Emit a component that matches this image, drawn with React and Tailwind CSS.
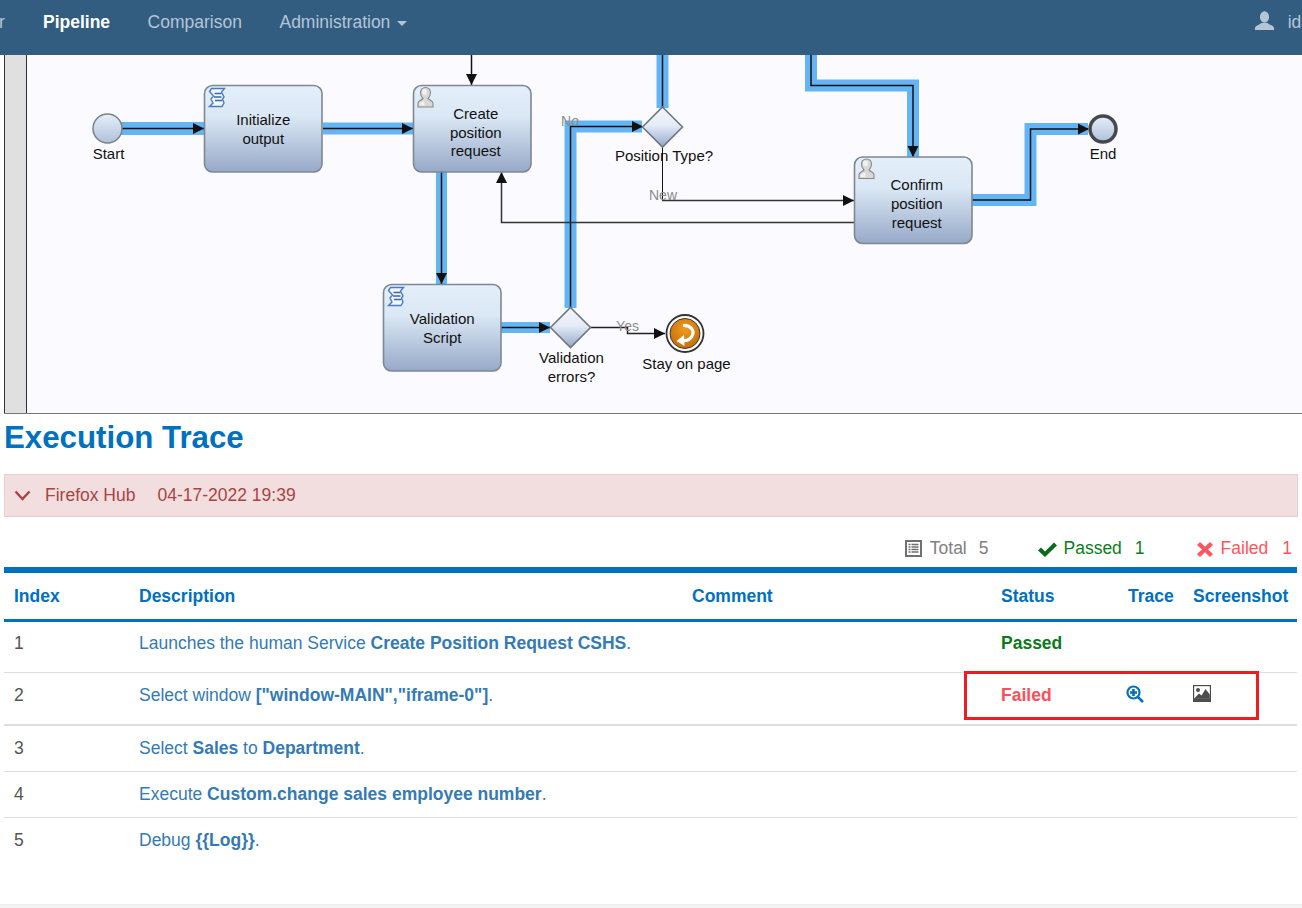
import React from "react";

function Arrow({ x, y, dir }) {
  const pts = {
    r: `${x},${y} ${x - 11},${y - 5.5} ${x - 11},${y + 5.5}`,
    d: `${x},${y} ${x - 5.5},${y - 11} ${x + 5.5},${y - 11}`,
    u: `${x},${y} ${x - 5.5},${y + 11} ${x + 5.5},${y + 11}`,
  }[dir];
  return <polygon points={pts} fill="#111" />;
}

function Flow({ d, hot, w = 1.5, color = "#111" }) {
  return (
    <g fill="none">
      {hot && <path d={d} stroke="#64b5f6" strokeWidth={hot} strokeLinejoin="miter" />}
      <path d={d} stroke={color} strokeWidth={w} />
    </g>
  );
}

function Lines({ items, x, y, size = 15, gap = 19 }) {
  return (
    <text x={x} textAnchor="middle" fontSize={size} fill="#111">
      {items.map((t, i) => (
        <tspan key={t} x={x} y={y + i * gap}>
          {t}
        </tspan>
      ))}
    </text>
  );
}

function ScriptIcon({ x, y }) {
  return (
    <g transform={`translate(${x} ${y})`} fill="#f2f7fd" stroke="#4a7cc4" strokeWidth="1.4">
      <path d="M3 0.5 H16 L13 4 L15.5 9 L14 11 L15.5 15 L13.5 18.5 H1 L4.5 15 L2.5 11 L5 8 L1 3.5 Z" />
      <path d="M6 5.5 H13 M5.5 9 H13 M6.5 12.5 H13.5" fill="none" stroke="#3a66ad" />
    </g>
  );
}

function UserIcon({ x, y }) {
  return (
    <g transform={`translate(${x} ${y})`}>
      <path d="M0.5 20 V16 C0.5 14 4 13 5.5 11.5 C4 10 3 8 3 5.5 C3 2.5 5 0.5 8 0.5 C11 0.5 13 2.5 13 5.5 C13 8 12 10 10.5 11.5 C12 13 15.5 14 15.5 16 V20 Z" fill="#d8d8d8" stroke="#8a8a8a" strokeWidth="1.1" />
      <ellipse cx="7" cy="5" rx="2.5" ry="3" fill="#f0f0f0" />
      <path d="M2 18.5 V16.5 C3 15 5 14.5 7 14.5 V18.5 Z" fill="#f0f0f0" />
    </g>
  );
}

function Task({ x, y, w = 117.5, h = 86.5, icon, label, ly, gap }) {
  return (
    <g>
      <rect x={x} y={y} width={w} height={h} rx="8" fill="url(#task)" stroke="#7f8890" strokeWidth="1.6" />
      {icon === "script" ? <ScriptIcon x={x + 4} y={y + 2.5} /> : <UserIcon x={x + 4} y={y + 1.5} />}
      <Lines items={label} x={x + (icon === "script" ? w / 2 : w / 2 + 3.5)} y={ly} gap={gap} />
    </g>
  );
}

function Gate({ cx, cy }) {
  return (
    <polygon
      points={`${cx},${cy - 20} ${cx + 20},${cy} ${cx},${cy + 20} ${cx - 20},${cy}`}
      fill="url(#gate)"
      stroke="#70777f"
      strokeWidth="1.6"
    />
  );
}

function Diagram() {
  return (
    <svg viewBox="27 55 1275 358" width="1275" height="358" className="block">
      <defs>
        <linearGradient id="task" x1="0" y1="0" x2="0" y2="1">
          <stop offset="0" stopColor="#e3effa" />
          <stop offset="0.35" stopColor="#dbe8f5" />
          <stop offset="1" stopColor="#97a9c8" />
        </linearGradient>
        <linearGradient id="gate" x1="0" y1="0" x2="0" y2="1">
          <stop offset="0" stopColor="#f2f5fc" />
          <stop offset="0.45" stopColor="#e6ecf7" />
          <stop offset="1" stopColor="#94a8cb" />
        </linearGradient>
        <linearGradient id="orb" x1="0" y1="0" x2="0" y2="1">
          <stop offset="0" stopColor="#e6eff9" />
          <stop offset="1" stopColor="#afc1da" />
        </linearGradient>
        <radialGradient id="orange" cx="0.5" cy="0.35" r="0.7">
          <stop offset="0" stopColor="#f09a1e" />
          <stop offset="1" stopColor="#c26a08" />
        </radialGradient>
      </defs>

      <Flow d="M121 128.5 H204" hot={13} />
      <Arrow x={204} y={128.5} dir="r" />
      <Flow d="M323 128.5 H413" hot={12} />
      <Arrow x={413} y={128.5} dir="r" />
      <Flow d="M441.5 172 V284" hot={11} />
      <Arrow x={441.5} y={284} dir="d" />
      <Flow d="M501 327.5 H550" hot={11} />
      <Arrow x={550} y={327.5} dir="r" />
      <Flow d="M570.5 308 V126.5 H642" hot={12} />
      <Arrow x={643} y={126.5} dir="r" />
      <Flow d="M662.5 55 V108" hot={12} />
      <Flow d="M811 55 V85.5 H913 V157" hot={12} />
      <Arrow x={913} y={157} dir="d" />
      <Flow d="M972 200 H1030.5 V129 H1088" hot={12} />
      <Arrow x={1089} y={129} dir="r" />
      <Flow d="M471.5 55 V85" />
      <Arrow x={471.5} y={85} dir="d" />
      <Flow d="M662.5 146 V200.5" w={1} />
      <Flow d="M662 200.5 H854" color="#333" />
      <Arrow x={854} y={200.5} dir="r" />
      <Flow d="M854 222.5 H501.5 V172" color="#333" />
      <Arrow x={501.5} y={172} dir="u" />
      <Flow d="M590 327.5 H627.5 V333.5 H665" color="#222" />
      <Arrow x={665} y={333.5} dir="r" />

      <circle cx="107.5" cy="128.5" r="14.5" fill="url(#orb)" stroke="#7b8288" strokeWidth="1.5" />
      <text x="108.5" y="158.5" textAnchor="middle" fontSize="15" fill="#111">Start</text>

      <Task x={204.5} y={85.5} icon="script" label={["Initialize", "output"]} ly={125} />
      <Task x={413.5} y={85.5} icon="user" label={["Create", "position", "request"]} ly={119} gap={18.5} />
      <Task x={383.5} y={284.5} icon="script" label={["Validation", "Script"]} ly={324} />
      <Task x={854.5} y={157} icon="user" label={["Confirm", "position", "request"]} ly={190} />

      <Gate cx={662.5} cy={127} />
      <Gate cx={570.5} cy={327.5} />
      <text x="664" y="161" textAnchor="middle" fontSize="15" fill="#111">Position Type?</text>
      <Lines items={["Validation", "errors?"]} x={571.5} y={363} gap={18.5} />

      <circle cx="1103" cy="129" r="13" fill="url(#orb)" stroke="#46494c" strokeWidth="3.5" />
      <text x="1103" y="159" textAnchor="middle" fontSize="15" fill="#111">End</text>

      <circle cx="685" cy="333.5" r="18.5" fill="#fff" stroke="#333" strokeWidth="1.8" />
      <circle cx="685" cy="333.5" r="15" fill="url(#orange)" stroke="#3a3a3a" strokeWidth="1" />
      <path d="M683 325.5 C691 325 695 331 692 336 C690 340 686 341 682 340.5" fill="none" stroke="#fff" strokeWidth="3.2" />
      <polygon points="676.5,341 684,335 684.5,346" fill="#fff" />
      <text x="686.5" y="369" textAnchor="middle" fontSize="15" fill="#111">Stay on page</text>

      <text x="570" y="126" textAnchor="middle" fontSize="14" fill="#8a8a8a">No</text>
      <text x="663" y="200" textAnchor="middle" fontSize="14" fill="#8a8a8a">New</text>
      <text x="627.5" y="331" textAnchor="middle" fontSize="14" fill="#8a8a8a">Yes</text>
    </svg>
  );
}

const rows = [
  { i: 1, h: "h-[52px]", pad: "pb-[6px]", parts: ["Launches the human Service ", <b key="b">Create Position Request CSHS</b>, "."], status: "Passed" },
  { i: 2, h: "h-[53px]", pad: "pb-[6px]", parts: ["Select window ", <b key="b">["window-MAIN","iframe-0"]</b>, "."], status: "Failed", thick: true },
  { i: 3, h: "h-[46px]", pad: "", parts: ["Select ", <b key="a">Sales</b>, " to ", <b key="b">Department</b>, "."] },
  { i: 4, h: "h-[46px]", pad: "", parts: ["Execute ", <b key="b">Custom.change sales employee number</b>, "."] },
  { i: 5, h: "h-[46px]", pad: "", parts: ["Debug ", <b key="b">{"{{Log}}"}</b>, "."], last: true },
];

function ZoomIcon() {
  return (
    <svg width="18" height="18" viewBox="0 0 18 18" className="-mt-[3px] block">
      <circle cx="7.5" cy="7.5" r="6" fill="none" stroke="#0070c0" strokeWidth="2.2" />
      <path d="M11.8 11.8 L17 17" stroke="#0070c0" strokeWidth="2.6" />
      <path d="M4 7.5 H11 M7.5 4 V11" stroke="#0070c0" strokeWidth="2.6" />
    </svg>
  );
}

function PictureIcon() {
  return (
    <svg width="18" height="17" viewBox="0 0 18 17" className="-mt-[3px] block">
      <rect width="18" height="17" fill="#4d4d4d" />
      <rect x="1.2" y="1.2" width="15.6" height="12" fill="#fff" />
      <circle cx="5" cy="5" r="2" fill="#4d4d4d" />
      <path d="M1.2 13.5 L6 8.5 L8.5 10.5 L12.5 4 L16.8 9.5 V13.5 Z" fill="#4d4d4d" />
    </svg>
  );
}

export default function App() {
  return (
    <div className="relative flex h-[908px] w-[1302px] flex-col overflow-hidden bg-white font-['Liberation_Sans',Arial,sans-serif] text-[17.5px] text-[#555]">
      <nav className="flex h-[55px] shrink-0 items-start bg-[#335c81] pt-[11px] text-[17.5px] leading-[22px] text-[#b4c6d6]">
        <div className="-ml-[1px] flex gap-[37.5px]">
          <span className="w-[6.5px] overflow-hidden">r</span>
          <span className="font-bold text-white">Pipeline</span>
          <span>Comparison</span>
          <span className="flex items-center">
            Administration
            <span className="ml-[7px] mt-[2px] h-0 w-0 border-x-[5px] border-t-[5px] border-x-transparent border-t-[#b4c6d6]" />
          </span>
        </div>
        <div className="-mr-[9px] ml-auto flex items-center gap-[14px]">
          <svg width="19" height="19" viewBox="0 0 19 19" className="-mt-[3px] block" fill="#b4c6d6">
            <ellipse cx="9.5" cy="6" rx="4.6" ry="5.8" />
            <path d="M0 19 V17 C0 15 4 14 6.5 12 H12.5 C15 14 19 15 19 17 V19 Z" />
          </svg>
          <span>ida</span>
        </div>
      </nav>

      <section className="ml-[4px] flex h-[359px] shrink-0 overflow-hidden border-b border-[#777] bg-[#fbfbff]">
        <div className="w-[23px] shrink-0 border-x border-x-[#333] bg-[#e0e0e0]" />
        <Diagram />
      </section>

      <main className="px-[4px]">
        <h1 className="mt-[6px] text-[31.25px] font-bold leading-[36px] text-[#0070c0]">Execution Trace</h1>

        <div className="mt-[18px] flex h-[43px] items-center border border-[#ebccd1] bg-[#f2dede] pl-[9px] text-[#a94442]">
          <svg width="17" height="11" viewBox="0 0 17 11" className="block" fill="none" stroke="#a94442" strokeWidth="2.4">
            <path d="M1.5 1.5 L8.5 9 L15.5 1.5" />
          </svg>
          <span className="ml-[14px]">Firefox Hub</span>
          <span className="ml-[22px]">04-17-2022 19:39</span>
        </div>

        <div className="mt-[21px] flex h-[20px] items-center justify-end pr-[6px] leading-[20px]">
          <span className="flex items-center text-[#808080]">
            <svg width="17" height="17" viewBox="0 0 17 17" className="mr-[8px] block">
              <rect width="17" height="17" fill="#707070" />
              <rect x="2" y="2" width="13" height="13" fill="#fff" />
              <path d="M3.5 4.5 H13.5 M3.5 7 H13.5 M3.5 9.5 H13.5 M3.5 12 H13.5" stroke="#707070" strokeWidth="1.3" strokeDasharray="2 1 7 0" />
            </svg>
            Total<span className="ml-[12px]">5</span>
          </span>
          <span className="ml-[50px] flex items-center text-[#0f7b21]">
            <svg width="19" height="15" viewBox="0 0 19 15" className="mr-[6px] mt-[2px] block" fill="#0a6b1d">
              <path d="M0 8.5 L3 5.5 L7 9.5 L16 0.5 L19 3.5 L7 15 Z" />
            </svg>
            Passed<span className="ml-[13px]">1</span>
          </span>
          <span className="ml-[52px] flex items-center text-[#ff5560]">
            <svg width="16" height="15" viewBox="0 0 16 15" className="mr-[8px] mt-[2px] block" fill="#ff5560">
              <path d="M3 0 L8 4.8 L13 0 L16 3 L11 7.5 L16 12 L13 15 L8 10.2 L3 15 L0 12 L5 7.5 L0 3 Z" />
            </svg>
            Failed<span className="ml-[14px]">1</span>
          </span>
        </div>

        <table className="mt-[9px] w-[1293px] table-fixed border-collapse">
          <colgroup>
            <col className="w-[125px]" />
            <col className="w-[553px]" />
            <col className="w-[309px]" />
            <col className="w-[127px]" />
            <col className="w-[65px]" />
            <col className="w-[114px]" />
          </colgroup>
          <thead>
            <tr className="h-[50px] border-y-[3px] border-t-[6px] border-[#0070c0] text-left font-bold text-[#0070c0]">
              <th className="pl-[10px]">Index</th>
              <th className="pl-[10px]">Description</th>
              <th className="pl-[10px]">Comment</th>
              <th className="pl-[10px]">Status</th>
              <th className="pl-[10px]">Trace</th>
              <th className="pl-[10px] whitespace-nowrap">Screenshot</th>
            </tr>
          </thead>
          <tbody>
            {rows.map((r) => (
              <tr
                key={r.i}
                className={`${r.h} ${r.last ? "" : r.thick ? "border-b-2 border-[#ddd]" : "border-b border-[#ddd]"}`}
              >
                <td className={`pl-[10px] ${r.pad}`}>{r.i}</td>
                <td className={`pl-[10px] text-[#337ab7] ${r.pad}`} colSpan={2}>
                  {r.parts}
                </td>
                <td className={`pl-[10px] font-bold ${r.pad} ${r.status === "Passed" ? "text-[#0a7a1a]" : "text-[#ff4d5a]"}`}>
                  {r.status}
                </td>
                <td className={`pl-[8px] ${r.pad}`}>{r.status === "Failed" && <ZoomIcon />}</td>
                <td className={`pl-[10px] ${r.pad}`}>{r.status === "Failed" && <PictureIcon />}</td>
              </tr>
            ))}
          </tbody>
        </table>
      </main>

      <div className="mt-auto h-[4px] shrink-0 border-t border-[#ececec] bg-[#f3f3f3]" />

      <div className="absolute left-[964px] top-[671px] h-[49px] w-[295px] border-[3px] border-[#ed1c24]" />
    </div>
  );
}
